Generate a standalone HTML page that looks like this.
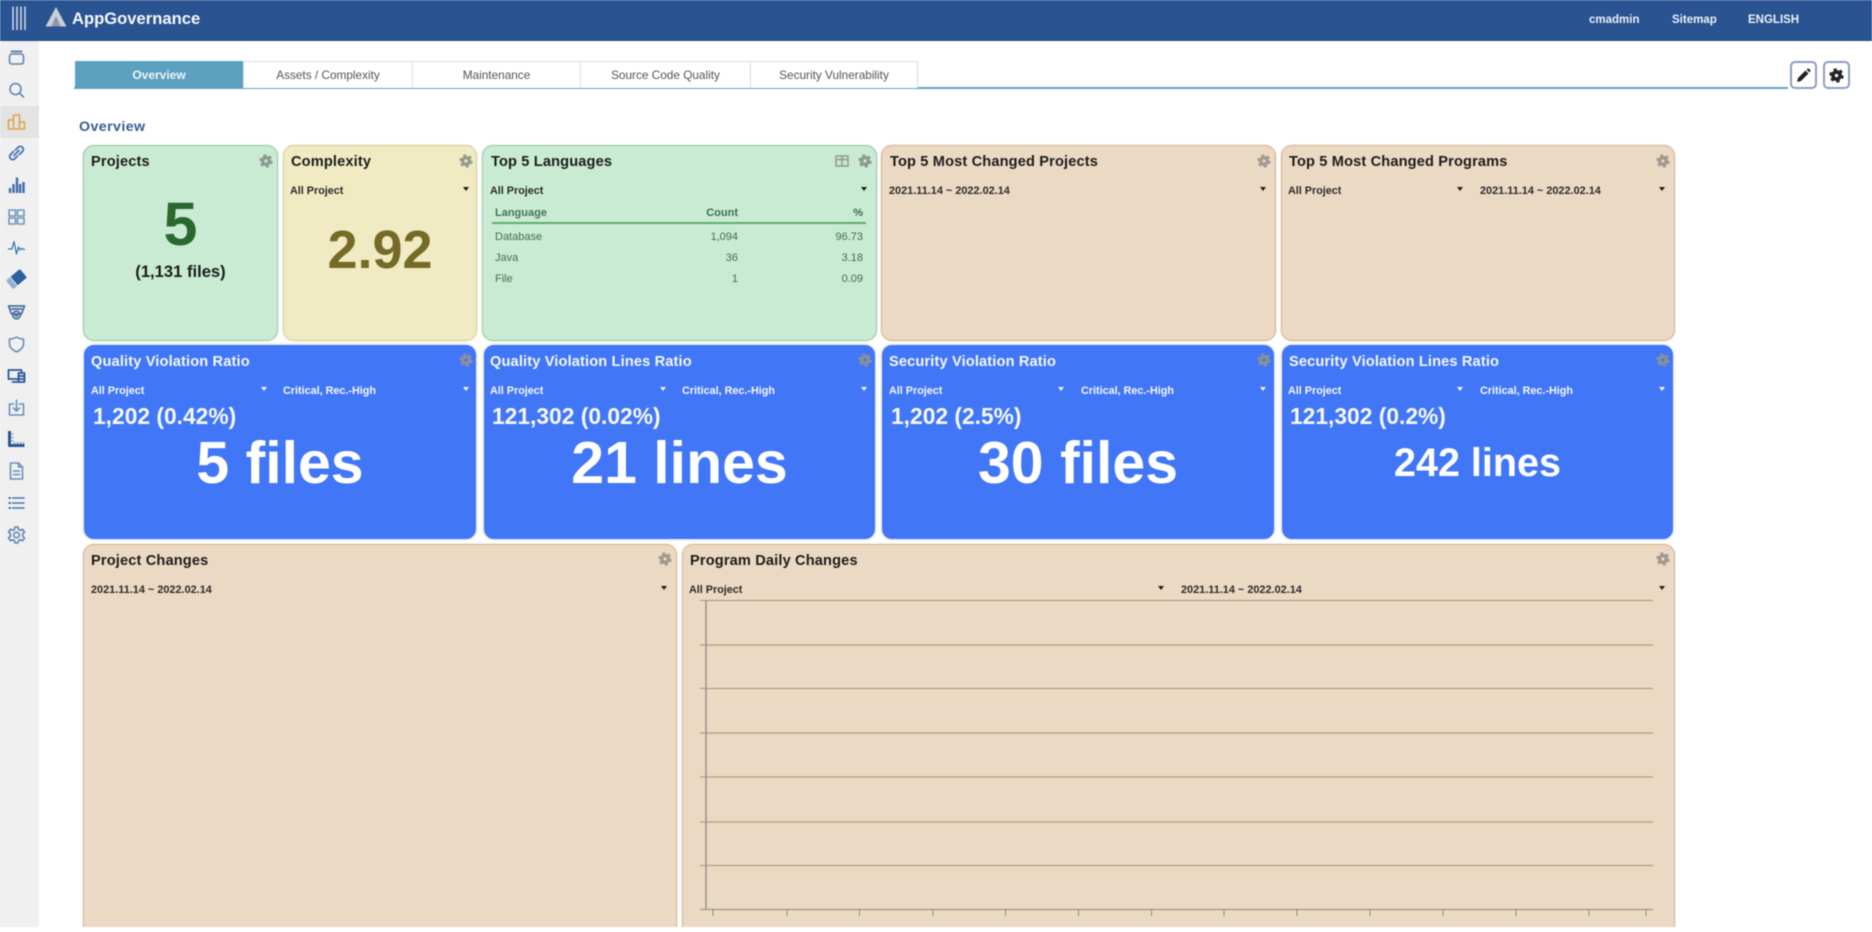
<!DOCTYPE html>
<html lang="en"><head><meta charset="utf-8"><title>AppGovernance</title>
<style>
*{box-sizing:border-box}
html,body{margin:0;padding:0;width:1872px;height:932px;overflow:hidden;background:#fff}
body{font-family:"Liberation Sans",Arial,sans-serif;color:#222}
#root{position:absolute;left:0;top:0;width:1872px;height:927px;overflow:hidden;filter:blur(.4px);background:#fff}
.a{position:absolute}
.t{position:absolute;line-height:20px;height:20px;white-space:nowrap;margin-top:1px}
.hd{left:0;top:0;width:1872px;height:41px;background:#2a5391;border-bottom:1px solid #1f4a8c}
.side{left:0;top:41px;width:39px;height:886px;background:#f0f0f0}
.act{left:0;top:106px;width:39px;height:32px;background:#e3e3e3}
.nav{font-size:11.5px;font-weight:bold;color:#eaf0f8;top:9px}
.tab{top:61px;height:27px;background:#fff;border:1px solid #ddd;border-bottom:none;text-align:center;font-size:11.8px;line-height:26px;color:#555}
.card{position:absolute;border-radius:11px;border:1.5px solid;box-shadow:0 0 2px rgba(0,0,0,.12)}
.g{background:#c9ebd3;border-color:#93c9a2}
.y{background:#f0ebc3;border-color:#d8cd93}
.o{background:#ecd9c4;border-color:#d5b38c}
.b{background:#4177f6;border-color:#e1e8f7}
.ti{font-size:14.6px;font-weight:bold;color:#1c1c1c;letter-spacing:.01em}
.dd{font-size:10.8px;font-weight:bold;color:#2b2b2b}
.dt{font-size:10.9px}
.w{color:#f4f7ff}
.car{position:absolute;width:0;height:0;margin-left:1px;border-left:3.2px solid transparent;border-right:3.2px solid transparent;border-top:4px solid #1c1c1c}
.cw{border-top-color:#f2f5fd}
.big{font-weight:bold;color:#fff;text-align:center;line-height:70px;height:70px;position:absolute;white-space:nowrap}
.num{font-size:22.8px;font-weight:bold;color:#f6f8ff;line-height:28px;height:28px;position:absolute;white-space:nowrap}
.gear{position:absolute;width:14px;height:14px}
.tb{font-size:11px;color:#3f6e4c;margin-top:2px}
.r{text-align:right}
</style></head><body>
<div id="root">
<svg width="0" height="0" style="position:absolute"><defs>
<symbol id="cog" viewBox="-8 -8 16 16"><circle r="3.8" fill="none" stroke="currentColor" stroke-width="4"/><circle r="6.4" fill="none" stroke="currentColor" stroke-width="2.6" stroke-dasharray="3.35 3.35"/></symbol>
</defs></svg>

<div class="a hd"></div>
<svg class="a" style="left:10px;top:4px" width="70" height="30" fill="none">
<path d="M3 2.500V26M7 2.500V26M11 2.500V26M15 2.500V26" stroke="#f3f6fb" stroke-width="1.4" opacity=".9"/>
<path d="M46 3 L35.500 22.500 L41.500 22.500 L46 13 L50.500 22.500 L56.500 22.500Z" fill="#c9ced8"/>
<path d="M46 14 L41.500 22.500 L50.500 22.500Z" fill="#8b97ab"/>
</svg>
<div class="t" style="left:72px;top:9px;margin-top:0;font-size:16.6px;font-weight:bold;color:#f5f7fb">AppGovernance</div>
<div class="t nav" style="left:1589px">cmadmin</div>
<div class="t nav" style="left:1672px">Sitemap</div>
<div class="t nav" style="left:1748px">ENGLISH</div>

<div class="a side"></div><div class="a act"></div>
<svg class="a" style="left:0;top:0" width="39" height="560" fill="none" stroke="#5f86b6" stroke-width="1.6" stroke-linecap="round" stroke-linejoin="round">
<g transform="translate(16.5,58)"><rect x="-7" y="-4" width="14" height="10" rx="2.5"/><path d="M-5-6.5H5" stroke-width="2"/></g>
<g transform="translate(16.5,90)"><circle cx="-1" cy="-1" r="5.5"/><path d="M3 3.2L7 7"/></g>
<g transform="translate(16.5,122)" stroke="#dfa64a"><path d="M-8 7V-2H-3V7M-3 7V-7H3V7M3 7V0H8V7M-8 7H8"/></g>
<g transform="translate(16.5,153)" stroke="#4a78b2" stroke-width="1.9"><path d="M-1 -3L2-6a3 3 0 0 1 4.2 4.2L3 1.500"/><path d="M1 3L-2 6a3 3 0 0 1-4.2-4.2L-3-1.500"/><path d="M-2.500 2.500L2.500-2.500"/></g>
<g transform="translate(16.5,185)" stroke="#3f6fa9" stroke-width="2.4" stroke-linecap="butt"><path d="M-6.500 8V3M-3 8V-1M0.500 8V-7.500M3.600 8V-1M7 8V-3"/></g>
<g transform="translate(16.5,217)" stroke="#7096c2"><rect x="-7.5" y="-7" width="6.5" height="6"/><rect x="1" y="-7" width="6.5" height="6"/><rect x="-7.5" y="1" width="6.5" height="6"/><rect x="1" y="1" width="6.5" height="6"/></g>
<g transform="translate(16.5,248)" stroke="#3f78b5" stroke-width="1.3"><path d="M-8 1H-4.500L-2.500-6.500L0 6L2 -1L3.500 2L5 0.500L8 1.500"/></g>
<g transform="translate(16.5,279)"><g transform="rotate(-40)"><rect x="-9" y="-5.5" width="18" height="11" rx="1.2" fill="#2f5f9e" stroke="none"/><rect x="-9" y="-5.500" width="5" height="11" rx="1" fill="#8fb0d6" stroke="none"/><path d="M-3.700-5.500V5.500" stroke="#f0f0f0" stroke-width="1"/></g></g>
<g transform="translate(16.5,312)" stroke="#4a6f9f" stroke-width="1.7"><path d="M-8-6H8L5 2H-5Z"/><circle cy="3" r="3.8"/><circle cy="3" r="1.1"/><path d="M-5-3H5"/></g>
<g transform="translate(16.5,344)" stroke="#6b8db5"><path d="M0-7C3-5 5-5 7-5V0C7 4 3 6.500 0 8C-3 6.500-7 4-7 0V-5C-5-5-3-5 0-7Z"/></g>
<g transform="translate(16.5,376)" stroke="#2c5796" stroke-width="1.8"><path d="M5-4V-6H-8V3H1M-4 6H1"/><rect x="2" y="-3" width="6" height="9"/><path d="M2 0H8M2 3H8"/></g>
<g transform="translate(16.5,408)" stroke="#6b90bc"><path d="M-3-4H-7V7H7V-4H3"/><path d="M0-8V3M-3 0L0 3L3 0"/></g>
<g transform="translate(16.5,439)" stroke="#2c5796" stroke-linecap="butt"><path d="M-7-8V6.500H8" stroke-width="3"/><path d="M-5-5H-3M-5-1.500H-3M-5 2H-3M-2 5V3M1 5V3M4 5V3M7 5V3" stroke-width="1.1" stroke="#5f86b6"/></g>
<g transform="translate(16.5,471)" stroke="#6b90bc"><path d="M-6-8H2L6-4V8H-6Z"/><path d="M2-8V-4H6M-3 0H3M-3 3.500H3"/></g>
<g transform="translate(16.5,503)" stroke="#4a78b2"><path d="M-4-5H7.500M-4 0H7.500M-4 5H7.500" stroke-width="1.4"/><path d="M-7-5H-6.600M-7 0H-6.600M-7 5H-6.600" stroke-width="2" stroke="#2c5796"/></g>
<g transform="translate(16.5,535)" stroke="#5f86b6"><circle r="2.8"/><path d="M-1.500-8H1.500L2-5.600L4-4.600L6-5.800L8-3L6.200-1.400V1.400L8 3L6 5.800L4 4.600L2 5.600L1.500 8H-1.500L-2 5.600L-4 4.600L-6 5.800L-8 3L-6.200 1.400V-1.400L-8-3L-6-5.800L-4-4.600L-2-5.600Z"/></g>
</svg>

<!-- tabs -->
<div class="a" style="left:74px;top:87px;width:1714px;height:2px;background:#62a5c6"></div>
<div class="a tab" style="left:75px;width:168px;background:#5ca0c0;border-color:#5ca0c0;color:#eef6fa;font-weight:bold;font-size:12px">Overview</div>
<div class="a tab" style="left:243px;width:170px">Assets / Complexity</div>
<div class="a tab" style="left:412px;width:169px">Maintenance</div>
<div class="a tab" style="left:580px;width:171px">Source Code Quality</div>
<div class="a tab" style="left:750px;width:168px">Security Vulnerability</div>

<div class="a" style="left:1790px;top:61px;width:27px;height:28px;border:2px solid #8f9dc0;border-radius:5px;background:#fff"></div>
<svg class="a" style="left:1796px;top:68px" width="15" height="15"><path d="M1 14L2 10L9.500 2.500L12.500 5.500L5 13Z" fill="#222"/><path d="M10.500 1.500L11.800.6Q12.400.2 13 .8L14.200 2Q14.800 2.600 14.300 3.200L13.500 4.500Z" fill="#222"/></svg>
<div class="a" style="left:1823px;top:61px;width:27px;height:28px;border:2px solid #8f9dc0;border-radius:5px;background:#fff"></div>
<svg class="a" style="left:1829px;top:68px;color:#222" width="15" height="15"><use href="#cog"/></svg>

<div class="t" style="left:79px;top:116px;font-size:14.2px;font-weight:bold;color:#3d5a94;letter-spacing:.03em">Overview</div>

<!-- row 1 -->
<div class="card g" style="left:83px;top:145px;width:195px;height:196px"></div>
<div class="t ti" style="left:91px;top:151px">Projects</div>
<div class="big" style="left:83px;width:195px;top:189px;font-size:61px;color:#2a682e">5</div>
<div class="t" style="left:83px;width:195px;top:261px;text-align:center;font-size:16.6px;font-weight:bold;color:#1c1c1c">(1,131 files)</div>

<div class="card y" style="left:283px;top:145px;width:194px;height:196px"></div>
<div class="t ti" style="left:291px;top:151px">Complexity</div>
<div class="t dd" style="left:290px;top:180px">All Project</div><div class="car" style="left:462px;top:187px"></div>
<div class="big" style="left:283px;width:194px;top:215px;font-size:54px;color:#756b26">2.92</div>

<div class="card g" style="left:482px;top:145px;width:395px;height:196px"></div>
<div class="t ti" style="left:491px;top:151px">Top 5 Languages</div>
<div class="t dd" style="left:490px;top:180px">All Project</div><div class="car" style="left:860px;top:187px"></div>
<div class="t tb" style="left:495px;top:201px;font-weight:bold;opacity:.95">Language</div>
<div class="t tb r" style="left:640px;width:98px;top:201px;font-weight:bold">Count</div>
<div class="t tb r" style="left:800px;width:63px;top:201px;font-weight:bold">%</div>
<div class="a" style="left:492px;top:222px;width:374px;height:2px;background:#5fae6e"></div>
<div class="t tb" style="left:495px;top:225px">Database</div><div class="t tb r" style="left:640px;width:98px;top:225px">1,094</div><div class="t tb r" style="left:800px;width:63px;top:225px">96.73</div>
<div class="t tb" style="left:495px;top:246px">Java</div><div class="t tb r" style="left:640px;width:98px;top:246px">36</div><div class="t tb r" style="left:800px;width:63px;top:246px">3.18</div>
<div class="t tb" style="left:495px;top:267px">File</div><div class="t tb r" style="left:640px;width:98px;top:267px">1</div><div class="t tb r" style="left:800px;width:63px;top:267px">0.09</div>
<svg class="a" style="left:835px;top:155px" width="14" height="12" fill="none" stroke="#8d9a93" stroke-width="1.5"><rect x="1" y="1" width="12" height="10"/><path d="M1 4.500H13M7 1V11"/></svg>

<div class="card o" style="left:881px;top:145px;width:395px;height:196px"></div>
<div class="t ti" style="left:890px;top:151px">Top 5 Most Changed Projects</div>
<div class="t dd dt" style="left:889px;top:180px">2021.11.14 ~ 2022.02.14</div><div class="car" style="left:1259px;top:187px"></div>

<div class="card o" style="left:1281px;top:145px;width:394px;height:196px"></div>
<div class="t ti" style="left:1289px;top:151px">Top 5 Most Changed Programs</div>
<div class="t dd" style="left:1288px;top:180px">All Project</div><div class="car" style="left:1456px;top:187px"></div>
<div class="t dd dt" style="left:1480px;top:180px">2021.11.14 ~ 2022.02.14</div><div class="car" style="left:1658px;top:187px"></div>

<!-- row 2 -->
<div class="card b" style="left:83px;top:344px;width:394px;height:196px"></div>
<div class="t ti w" style="left:91px;top:351px">Quality Violation Ratio</div>
<div class="t dd w" style="left:91px;top:380px">All Project</div><div class="car cw" style="left:260px;top:387px"></div>
<div class="t dd w" style="left:283px;top:380px">Critical, Rec.-High</div><div class="car cw" style="left:462px;top:387px"></div>
<div class="num" style="left:93px;top:402px">1,202 (0.42%)</div>
<div class="big" style="left:83px;width:394px;top:428px;font-size:59px">5 files</div>

<div class="card b" style="left:483px;top:344px;width:393px;height:196px"></div>
<div class="t ti w" style="left:490px;top:351px">Quality Violation Lines Ratio</div>
<div class="t dd w" style="left:490px;top:380px">All Project</div><div class="car cw" style="left:659px;top:387px"></div>
<div class="t dd w" style="left:682px;top:380px">Critical, Rec.-High</div><div class="car cw" style="left:860px;top:387px"></div>
<div class="num" style="left:492px;top:402px">121,302 (0.02%)</div>
<div class="big" style="left:483px;width:393px;top:428px;font-size:59px">21 lines</div>

<div class="card b" style="left:881px;top:344px;width:394px;height:196px"></div>
<div class="t ti w" style="left:889px;top:351px">Security Violation Ratio</div>
<div class="t dd w" style="left:889px;top:380px">All Project</div><div class="car cw" style="left:1057px;top:387px"></div>
<div class="t dd w" style="left:1081px;top:380px">Critical, Rec.-High</div><div class="car cw" style="left:1259px;top:387px"></div>
<div class="num" style="left:891px;top:402px">1,202 (2.5%)</div>
<div class="big" style="left:881px;width:394px;top:428px;font-size:59px">30 files</div>

<div class="card b" style="left:1281px;top:344px;width:393px;height:196px"></div>
<div class="t ti w" style="left:1289px;top:351px">Security Violation Lines Ratio</div>
<div class="t dd w" style="left:1288px;top:380px">All Project</div><div class="car cw" style="left:1456px;top:387px"></div>
<div class="t dd w" style="left:1480px;top:380px">Critical, Rec.-High</div><div class="car cw" style="left:1658px;top:387px"></div>
<div class="num" style="left:1290px;top:402px">121,302 (0.2%)</div>
<div class="big" style="left:1281px;width:393px;top:428px;font-size:39.5px">242 lines</div>

<!-- row 3 -->
<div class="card o" style="left:83px;top:544px;width:594px;height:400px"></div>
<div class="t ti" style="left:91px;top:550px">Project Changes</div>
<div class="t dd dt" style="left:91px;top:579px">2021.11.14 ~ 2022.02.14</div><div class="car" style="left:660px;top:586px"></div>

<div class="card o" style="left:682px;top:544px;width:993px;height:400px"></div>
<div class="t ti" style="left:690px;top:550px">Program Daily Changes</div>
<div class="t dd" style="left:689px;top:579px">All Project</div><div class="car" style="left:1157px;top:586px"></div>
<div class="t dd dt" style="left:1181px;top:579px">2021.11.14 ~ 2022.02.14</div><div class="car" style="left:1658px;top:586px"></div>
<svg class="a" style="left:690px;top:590px" width="975" height="335" fill="none">
<g stroke="#b69c80" stroke-width="1.2">
<path d="M10 10.500H963M10 55H963M10 98.500H963M10 143H963M10 187H963M10 232H963M10 275.500H963"/></g>
<path d="M16 10V319" stroke="#9c958b" stroke-width="1.6"/>
<path d="M10 319.500H963" stroke="#9c958b" stroke-width="1.2"/>
<path d="M23 319V326M97 319V326M169.500 319V326M243 319V326M315.500 319V326M388.500 319V326M461.500 319V326M534 319V326M607 319V326M680 319V326M753 319V326M826 319V326M899 319V326M956 319V326" stroke="#8f887e" stroke-width="1"/>
</svg>

<!-- gears -->
<svg class="gear" style="left:259px;top:154px;color:#8d9a93"><use href="#cog"/></svg>
<svg class="gear" style="left:459px;top:154px;color:#979c8a"><use href="#cog"/></svg>
<svg class="gear" style="left:858px;top:154px;color:#8d9a93"><use href="#cog"/></svg>
<svg class="gear" style="left:1257px;top:154px;color:#a09a90"><use href="#cog"/></svg>
<svg class="gear" style="left:1656px;top:154px;color:#a09a90"><use href="#cog"/></svg>
<svg class="gear" style="left:459px;top:353px;color:#8b8f9b"><use href="#cog"/></svg>
<svg class="gear" style="left:858px;top:353px;color:#8b8f9b"><use href="#cog"/></svg>
<svg class="gear" style="left:1257px;top:353px;color:#8b8f9b"><use href="#cog"/></svg>
<svg class="gear" style="left:1656px;top:353px;color:#8b8f9b"><use href="#cog"/></svg>
<svg class="gear" style="left:658px;top:552px;color:#a09a90"><use href="#cog"/></svg>
<svg class="gear" style="left:1656px;top:552px;color:#a09a90"><use href="#cog"/></svg>
</div>
</body></html>
